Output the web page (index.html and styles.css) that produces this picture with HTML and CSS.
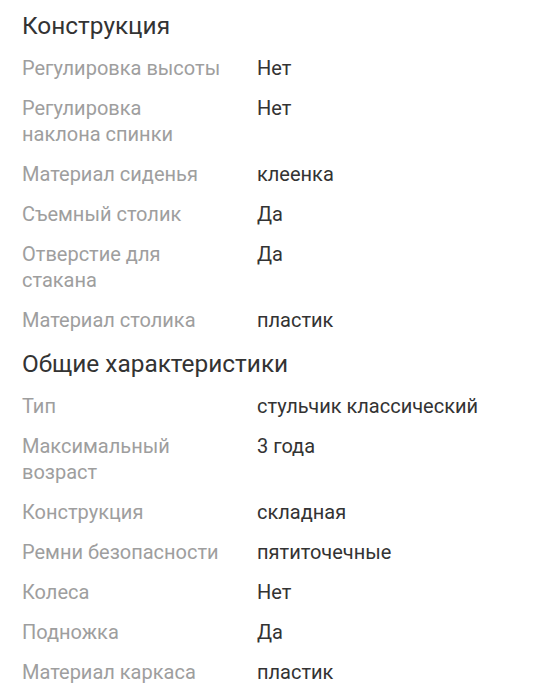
FILE: index.html
```html
<!DOCTYPE html>
<html lang="ru">
<head>
<meta charset="utf-8">
<link rel="stylesheet" href="styles.css">
</head>
<body>
<div class="specs">
  <section class="group">
    <h2 class="group-title">Конструкция</h2>
    <div class="row"><div class="label">Регулировка высоты</div><div class="value">Нет</div></div>
    <div class="row"><div class="label">Регулировка наклона спинки</div><div class="value">Нет</div></div>
    <div class="row"><div class="label">Материал сиденья</div><div class="value">клеенка</div></div>
    <div class="row"><div class="label">Съемный столик</div><div class="value">Да</div></div>
    <div class="row"><div class="label">Отверстие для стакана</div><div class="value">Да</div></div>
    <div class="row"><div class="label">Материал столика</div><div class="value">пластик</div></div>
  </section>
  <section class="group">
    <h2 class="group-title">Общие характеристики</h2>
    <div class="row"><div class="label">Тип</div><div class="value">стульчик классический</div></div>
    <div class="row"><div class="label">Максимальный возраст</div><div class="value">3 года</div></div>
    <div class="row"><div class="label">Конструкция</div><div class="value">складная</div></div>
    <div class="row"><div class="label">Ремни безопасности</div><div class="value">пятиточечные</div></div>
    <div class="row"><div class="label">Колеса</div><div class="value">Нет</div></div>
    <div class="row"><div class="label">Подножка</div><div class="value">Да</div></div>
    <div class="row"><div class="label">Материал каркаса</div><div class="value">пластик</div></div>
  </section>
</div>
</body>
</html>
```

FILE: styles.css
```css
html, body {
  margin: 0;
  padding: 0;
  background: #ffffff;
}
body {
  font-family: Roboto, "Noto Sans", sans-serif;
  color: #333333;
}
.specs {
  padding: 2px 22px 0 22px;
}
.group-title {
  margin: 0;
  padding: 8px 0 6px;
  font-size: 24.4px;
  line-height: 32px;
  font-weight: 400;
  color: #333333;
}
.row {
  display: grid;
  grid-template-columns: 202px 1fr;
  column-gap: 33px;
  padding: 7px 0;
  font-size: 20px;
  line-height: 26px;
}
.label {
  color: #9e9e9e;
}
.value {
  color: #333333;
}
```
